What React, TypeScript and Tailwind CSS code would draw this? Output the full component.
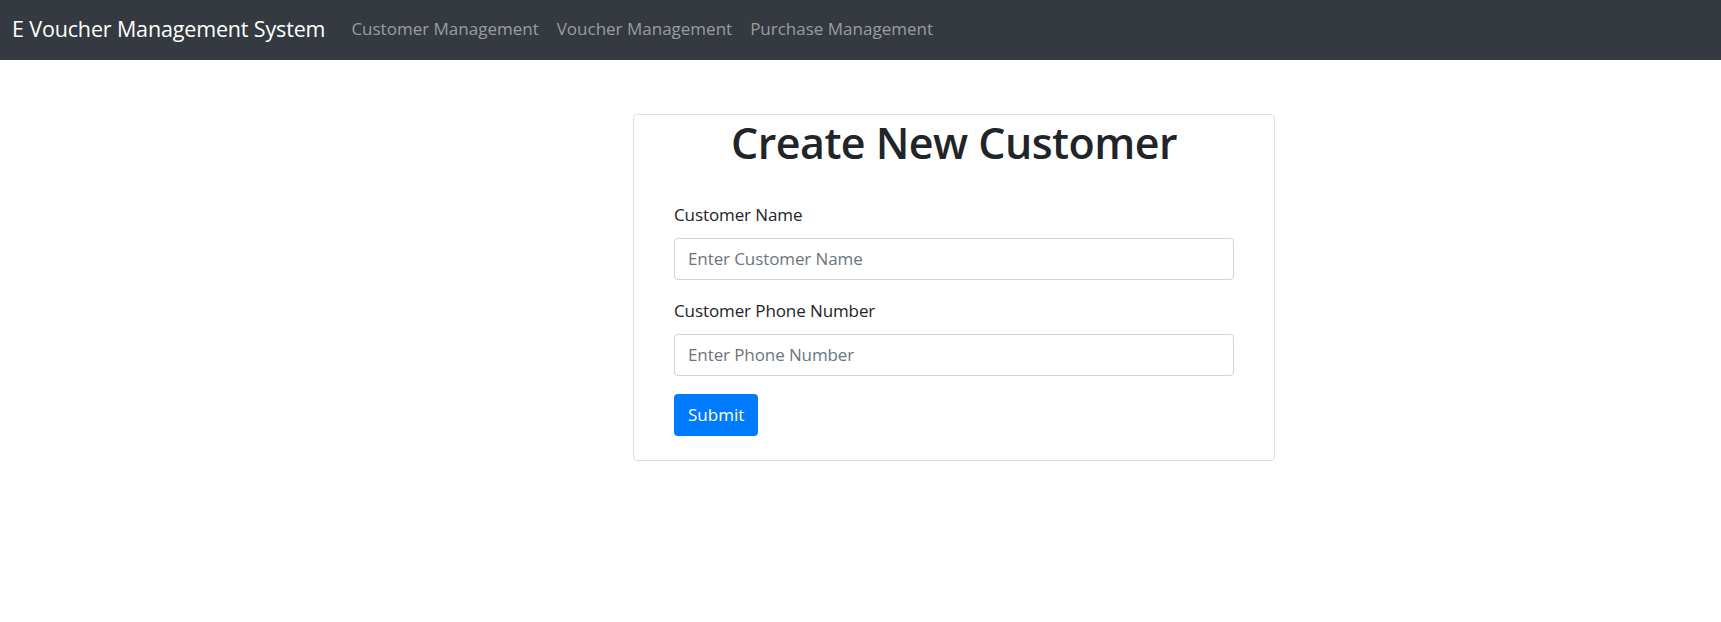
export default function App() {
  return (
    <div className="min-h-screen bg-white font-['Segoe_UI','Open_Sans',sans-serif] text-[#212529]">
      <nav className="flex h-[60px] items-center bg-[#343a40] pb-[3px] pl-[12px]">
        <a href="#" className="mr-[17px] text-[21.5px] leading-[33px] tracking-[-0.15px] text-white">
          E Voucher Management System
        </a>
        <ul className="flex items-center">
          <li>
            <a href="#" className="px-[9px] text-[17px] leading-[26px] text-[#9a9da0]">
              Customer Management
            </a>
          </li>
          <li>
            <a href="#" className="px-[9px] text-[17px] leading-[26px] text-[#9a9da0]">
              Voucher Management
            </a>
          </li>
          <li>
            <a href="#" className="px-[9px] text-[17px] leading-[26px] text-[#9a9da0]">
              Purchase Management
            </a>
          </li>
        </ul>
      </nav>

      <main className="pl-[633px] pt-[54px]">
        <div className="w-[642px] rounded-[4px] border border-[#dfdfdf]">
          <h1 className="mb-[9px] pt-[2px] text-center text-[43px] font-semibold leading-[52.8px] tracking-[-0.55px]">
            Create New Customer
          </h1>
          <form className="px-[40px] pb-[24px] pt-[23px]">
            {/* name */}
            <div className="mb-[18px]">
              <label className="mb-[10px] block text-[17px] leading-[26px] tracking-[-0.1px]">
                Customer Name
              </label>
              <input
                type="text"
                placeholder="Enter Customer Name"
                className="block h-[42px] w-full rounded-[4px] border border-[#ced4da] px-[13px] text-[17px] tracking-[-0.1px] placeholder:text-[#6c757d]"
              />
            </div>
            {/* phone */}
            <div className="mb-[18px]">
              <label className="mb-[10px] block text-[17px] leading-[26px] tracking-[-0.1px]">
                Customer Phone Number
              </label>
              <input
                type="text"
                placeholder="Enter Phone Number"
                className="block h-[42px] w-full rounded-[4px] border border-[#ced4da] px-[13px] text-[17px] tracking-[-0.1px] placeholder:text-[#6c757d]"
              />
            </div>
            <button
              type="submit"
              className="h-[42px] rounded-[4px] bg-[#007bff] px-[14px] text-[17px] text-white"
            >
              Submit
            </button>
          </form>
        </div>
      </main>
    </div>
  );
}
